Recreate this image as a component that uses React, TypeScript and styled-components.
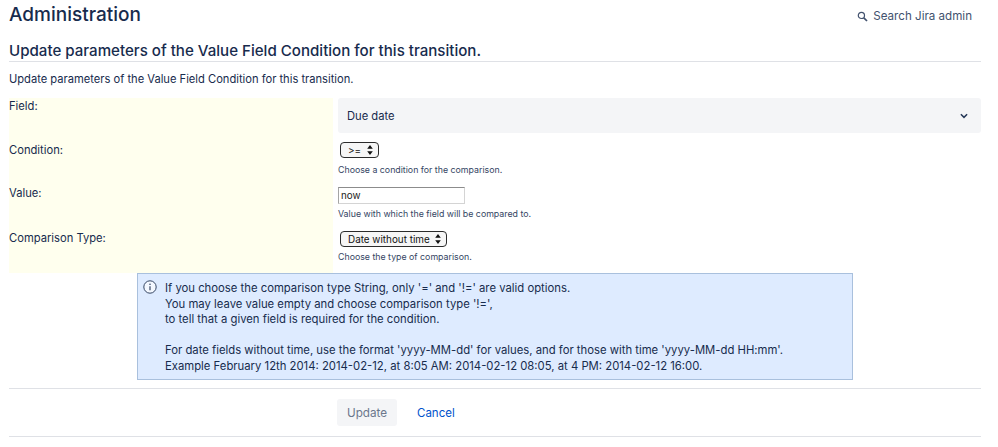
import styled, { createGlobalStyle } from 'styled-components';

const GlobalStyle = createGlobalStyle`
    html, body {
        margin: 0;
        padding: 0;
        background: #fff;
        overflow: hidden;
    }
    body {
        font-family: Inter, "Liberation Sans", sans-serif;
        color: #172b4d;
    }
`;

const Page = styled.div`
    width: 998px;
    height: 447px;
    box-sizing: border-box;
    padding: 0 17px 0 9px;
`;

const TopBar = styled.header`
    display: flex;
    justify-content: space-between;
    align-items: center;
    height: 29px;
    margin-bottom: 2px;
    padding-right: 9px;
`;

const PageTitle = styled.h1`
    margin: 0;
    font-size: 19px;
    line-height: 29px;
    font-weight: 500;
    color: #172b4d;
`;

const SearchLink = styled.a`
    display: flex;
    align-items: center;
    gap: 5px;
    margin-top: 3px;
    font-size: 11.6px;
    color: #42526e;
`;

const SectionTitle = styled.h2`
    margin: 12px 0 0;
    height: 20px;
    font-size: 15.1px;
    line-height: 20px;
    font-weight: 500;
    color: #172b4d;
    border-bottom: 1px solid #dfe1e6;
`;

const Intro = styled.p`
    margin: 10px 0 0;
    font-size: 11.15px;
    line-height: 15px;
    height: 15px;
`;

const FormTable = styled.div`
    display: grid;
    grid-template-columns: 324px 1fr;
    column-gap: 5px;
    margin-top: 11px;
    height: 175px;
`;

const LabelCell = styled.div<{ $h: number }>`
    height: ${(p) => p.$h}px;
    box-sizing: border-box;
    background: #ffffee;
    font-size: 11.2px;
    line-height: 14px;
    padding-top: 1px;
`;

const ValueCell = styled.div<{ $h: number }>`
    height: ${(p) => p.$h}px;
    box-sizing: border-box;
`;

const FieldSelect = styled.div`
    height: 35px;
    border-radius: 3px;
    background: #f4f5f7;
    display: flex;
    align-items: center;
    justify-content: space-between;
    padding: 0 13px 0 9px;
    font-size: 11.2px;
`;

const MiniSelect = styled.div<{ $w: number; $top: number }>`
    width: ${(p) => p.$w}px;
    height: 16px;
    box-sizing: border-box;
    margin: ${(p) => p.$top}px 0 0 2px;
    border: 1px solid #2b2b2b;
    border-radius: 4px;
    background: #f6f6f6;
    display: flex;
    align-items: center;
    justify-content: space-between;
    padding: 0 5px 0 7px;
    font-size: 9.9px;
    color: #111;
`;

const ValueInput = styled.div`
    width: 127px;
    height: 17px;
    box-sizing: border-box;
    margin-top: 2px;
    border: 1px solid #d4d4d4;
    border-top-color: #8c8c8c;
    border-left-color: #a5a5a5;
    padding-left: 2px;
    font-size: 9.8px;
    line-height: 15px;
    color: #222;
`;

const Help = styled.div<{ $gap: number }>`
    margin-top: ${(p) => p.$gap}px;
    font-size: 8.8px;
    line-height: 12px;
    color: #344563;
`;

const InfoBox = styled.section`
    display: flex;
    gap: 8px;
    box-sizing: border-box;
    width: 716px;
    height: 107px;
    margin: 0 0 0 128px;
    padding: 6px 0 0 5px;
    background: #deebff;
    border: 1px solid #a9c0dd;
    font-size: 11.3px;
    line-height: 15.6px;
    color: #172b4d;
`;

const InfoText = styled.div`
    margin-top: 1px;
    white-space: pre-line;
`;

const Actions = styled.div`
    display: flex;
    align-items: center;
    gap: 20px;
    height: 49px;
    margin-top: 8px;
    padding-left: 328px;
    box-sizing: border-box;
    border-top: 1px solid #dfe1e6;
    border-bottom: 1px solid #dfe1e6;
`;

const UpdateButton = styled.button`
    width: 60px;
    height: 27px;
    border: 0;
    border-radius: 3px;
    background: #f4f5f7;
    color: #6b778c;
    font: 400 11.7px Inter, "Liberation Sans", sans-serif;
`;

const CancelLink = styled.a`
    font-size: 11.5px;
    color: #0052cc;
`;

const InfoGlyph = styled.svg`
    flex: none;
`;

const SearchIcon = () => (
    <svg width="11" height="11" viewBox="0 0 11 11" fill="none" stroke="#42526e">
        <circle cx="4.4" cy="4.4" r="3.1" strokeWidth="1.2" />
        <path d="M6.8 6.8L10 10" strokeWidth="1.7" />
    </svg>
);

const Chevron = () => (
    <svg width="8" height="6" viewBox="0 0 9 6" fill="none" stroke="#253858" strokeWidth="1.7">
        <path d="M1 1l3.5 3.5L8 1" />
    </svg>
);

const UpDown = () => (
    <svg width="6" height="10" viewBox="0 0 6 10" fill="#111">
        <path d="M3 0l2.8 3.8H.2zM3 10L.2 6.2h5.6z" />
    </svg>
);

const InfoIcon = () => (
    <InfoGlyph width="14" height="14" viewBox="0 0 14 14" fill="none" stroke="#344563">
        <circle cx="7" cy="7" r="6.2" strokeWidth="1" fill="#f4f8ff" />
        <path d="M7 6.2v4" strokeWidth="1.2" />
        <circle cx="7" cy="4.2" r=".8" fill="#344563" stroke="none" />
    </InfoGlyph>
);

export default function App() {
    return (
        <Page>
            <GlobalStyle />
            <TopBar>
                <PageTitle>Administration</PageTitle>
                <SearchLink>
                    <SearchIcon />
                    Search Jira admin
                </SearchLink>
            </TopBar>
            <SectionTitle>Update parameters of the Value Field Condition for this transition.</SectionTitle>
            <Intro>Update parameters of the Value Field Condition for this transition.</Intro>
            <FormTable>
                <LabelCell $h={44}>Field:</LabelCell>
                <ValueCell $h={44}>
                    <FieldSelect>
                        Due date
                        <Chevron />
                    </FieldSelect>
                </ValueCell>
                <LabelCell $h={43}>Condition:</LabelCell>
                <ValueCell $h={43}>
                    <MiniSelect $w={39} $top={0}>
                        &gt;=
                        <UpDown />
                    </MiniSelect>
                    <Help $gap={6}>Choose a condition for the comparison.</Help>
                </ValueCell>
                <LabelCell $h={45}>Value:</LabelCell>
                <ValueCell $h={45}>
                    <ValueInput>now</ValueInput>
                    <Help $gap={4}>Value with which the field will be compared to.</Help>
                </ValueCell>
                <LabelCell $h={43}>Comparison Type:</LabelCell>
                <ValueCell $h={43}>
                    <MiniSelect $w={107} $top={1}>
                        Date without time
                        <UpDown />
                    </MiniSelect>
                    <Help $gap={4}>Choose the type of comparison.</Help>
                </ValueCell>
            </FormTable>
            <InfoBox>
                <InfoIcon />
                <InfoText>
                    {`If you choose the comparison type String, only '=' and '!=' are valid options.
You may leave value empty and choose comparison type '!=',
to tell that a given field is required for the condition.

For date fields without time, use the format 'yyyy-MM-dd' for values, and for those with time 'yyyy-MM-dd HH:mm'.
Example February 12th 2014: 2014-02-12, at 8:05 AM: 2014-02-12 08:05, at 4 PM: 2014-02-12 16:00.`}
                </InfoText>
            </InfoBox>
            <Actions>
                <UpdateButton>Update</UpdateButton>
                <CancelLink>Cancel</CancelLink>
            </Actions>
        </Page>
    );
}
